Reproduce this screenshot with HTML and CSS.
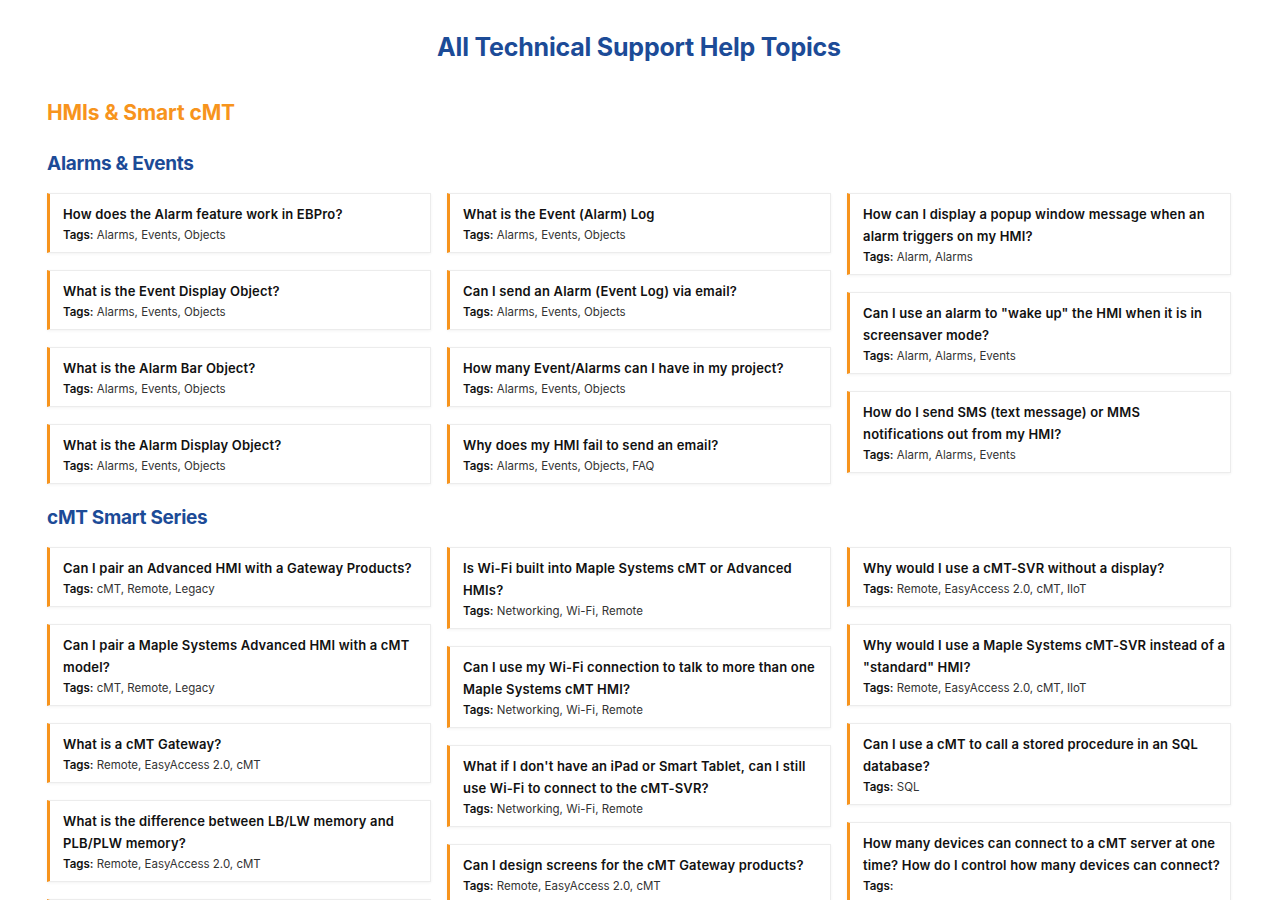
FILE: index.html
```html
<!DOCTYPE html>
<html lang="en">
<head>
  <meta charset="UTF-8" />
  <meta name="viewport" content="width=device-width, initial-scale=1" />
  <title>All Technical Support Help Topics</title>
  <link rel="stylesheet" href="styles.css">
</head>
<body>

  <h1 class="page-title">All Technical Support Help Topics</h1>

  <section class="category">
    <h2>HMIs &amp; Smart cMT</h2>

    <h3>Alarms &amp; Events</h3>
    <div class="topics">
      <div class="col">
        <a class="topic" href="#"><strong>How does the Alarm feature work in EBPro?</strong><p><b>Tags:</b> Alarms, Events, Objects</p></a>
        <a class="topic" href="#"><strong>What is the Event Display Object?</strong><p><b>Tags:</b> Alarms, Events, Objects</p></a>
        <a class="topic" href="#"><strong>What is the Alarm Bar Object?</strong><p><b>Tags:</b> Alarms, Events, Objects</p></a>
        <a class="topic" href="#"><strong>What is the Alarm Display Object?</strong><p><b>Tags:</b> Alarms, Events, Objects</p></a>
      </div>
      <div class="col">
        <a class="topic" href="#"><strong>What is the Event (Alarm) Log</strong><p><b>Tags:</b> Alarms, Events, Objects</p></a>
        <a class="topic" href="#"><strong>Can I send an Alarm (Event Log) via email?</strong><p><b>Tags:</b> Alarms, Events, Objects</p></a>
        <a class="topic" href="#"><strong>How many Event/Alarms can I have in my project?</strong><p><b>Tags:</b> Alarms, Events, Objects</p></a>
        <a class="topic" href="#"><strong>Why does my HMI fail to send an email?</strong><p><b>Tags:</b> Alarms, Events, Objects, FAQ</p></a>
      </div>
      <div class="col">
        <a class="topic" href="#"><strong>How can I display a popup window message when an alarm triggers on my HMI?</strong><p><b>Tags:</b> Alarm, Alarms</p></a>
        <a class="topic" href="#"><strong>Can I use an alarm to "wake up" the HMI when it is in screensaver mode?</strong><p><b>Tags:</b> Alarm, Alarms, Events</p></a>
        <a class="topic" href="#"><strong>How do I send SMS (text message) or MMS<br>notifications out from my HMI?</strong><p><b>Tags:</b> Alarm, Alarms, Events</p></a>
      </div>
    </div>

    <h3>cMT Smart Series</h3>
    <div class="topics">
      <div class="col">
        <a class="topic" href="#"><strong>Can I pair an Advanced HMI with a Gateway Products?</strong><p><b>Tags:</b> cMT, Remote, Legacy</p></a>
        <a class="topic" href="#"><strong>Can I pair a Maple Systems Advanced HMI with a cMT model?</strong><p><b>Tags:</b> cMT, Remote, Legacy</p></a>
        <a class="topic" href="#"><strong>What is a cMT Gateway?</strong><p><b>Tags:</b> Remote, EasyAccess 2.0, cMT</p></a>
        <a class="topic" href="#"><strong>What is the difference between LB/LW memory and PLB/PLW memory?</strong><p><b>Tags:</b> Remote, EasyAccess 2.0, cMT</p></a>
        <a class="topic" href="#"><strong>How do I access the cMT Viewer on a PC?</strong><p><b>Tags:</b> Remote, EasyAccess 2.0, cMT</p></a>
      </div>
      <div class="col">
        <a class="topic" href="#"><strong>Is Wi-Fi built into Maple Systems cMT or Advanced HMIs?</strong><p><b>Tags:</b> Networking, Wi-Fi, Remote</p></a>
        <a class="topic" href="#"><strong>Can I use my Wi-Fi connection to talk to more than one Maple Systems cMT HMI?</strong><p><b>Tags:</b> Networking, Wi-Fi, Remote</p></a>
        <a class="topic" href="#"><strong>What if I don't have an iPad or Smart Tablet, can I still use Wi-Fi to connect to the cMT-SVR?</strong><p><b>Tags:</b> Networking, Wi-Fi, Remote</p></a>
        <a class="topic" href="#"><strong>Can I design screens for the cMT Gateway products?</strong><p><b>Tags:</b> Remote, EasyAccess 2.0, cMT</p></a>
      </div>
      <div class="col">
        <a class="topic" href="#"><strong>Why would I use a cMT-SVR without a display?</strong><p><b>Tags:</b> Remote, EasyAccess 2.0, cMT, IIoT</p></a>
        <a class="topic" href="#"><strong>Why would I use a Maple Systems cMT-SVR instead of a "standard" HMI?</strong><p><b>Tags:</b> Remote, EasyAccess 2.0, cMT, IIoT</p></a>
        <a class="topic" href="#"><strong>Can I use a cMT to call a stored procedure in an SQL database?</strong><p><b>Tags:</b> SQL</p></a>
        <a class="topic" href="#"><strong>How many devices can connect to a cMT server at one time? How do I control how many devices can connect?</strong><p><b>Tags:</b> </p></a>
      </div>
    </div>
  </section>

</body>
</html>
```

FILE: styles.css
```css
body {
  margin: 0;
  padding: 0 49px 40px 47px;
  background: #fff;
  font-family: Inter, 'Noto Sans', sans-serif;
  color: #111;
}

.page-title {
  margin: 30px 0 0;
  font-size: 25px;
  line-height: 34px;
  font-weight: 700;
  text-align: center;
  color: #1c4b97;
  letter-spacing: -0.2px;
}

.category h2 {
  margin: 34px 0 0;
  font-size: 21px;
  line-height: 30px;
  font-weight: 700;
  color: #f7941d;
  letter-spacing: -0.1px;
}
.category h3 {
  margin: 20px 0 15px;
  font-size: 19px;
  line-height: 28px;
  font-weight: 700;
  color: #1c4b97;
  letter-spacing: -0.3px;
}
.category h2 + h3 {
  margin-top: 22px;
}

.topics {
  display: flex;
  gap: 16px;
  align-items: flex-start;
}
.col {
  flex: 1;
  min-width: 0;
  display: flex;
  flex-direction: column;
  gap: 17px;
}

.topic {
  display: block;
  padding: 9px 3px 8px 13px;
  border: 1px solid #ececec;
  border-left: 3px solid #f7941d;
  box-shadow: 0 1px 3px rgba(0,0,0,0.05);
  text-decoration: none;
  color: #111;
}
.topic strong {
  display: block;
  font-size: 13px;
  line-height: 22px;
  font-weight: 600;
  letter-spacing: 0.18px;
}
.topic p {
  margin: 1px 0 0;
  font-size: 11.5px;
  line-height: 18px;
  color: #333;
}
.topic p b {
  font-weight: 600;
  color: #111;
}
```
